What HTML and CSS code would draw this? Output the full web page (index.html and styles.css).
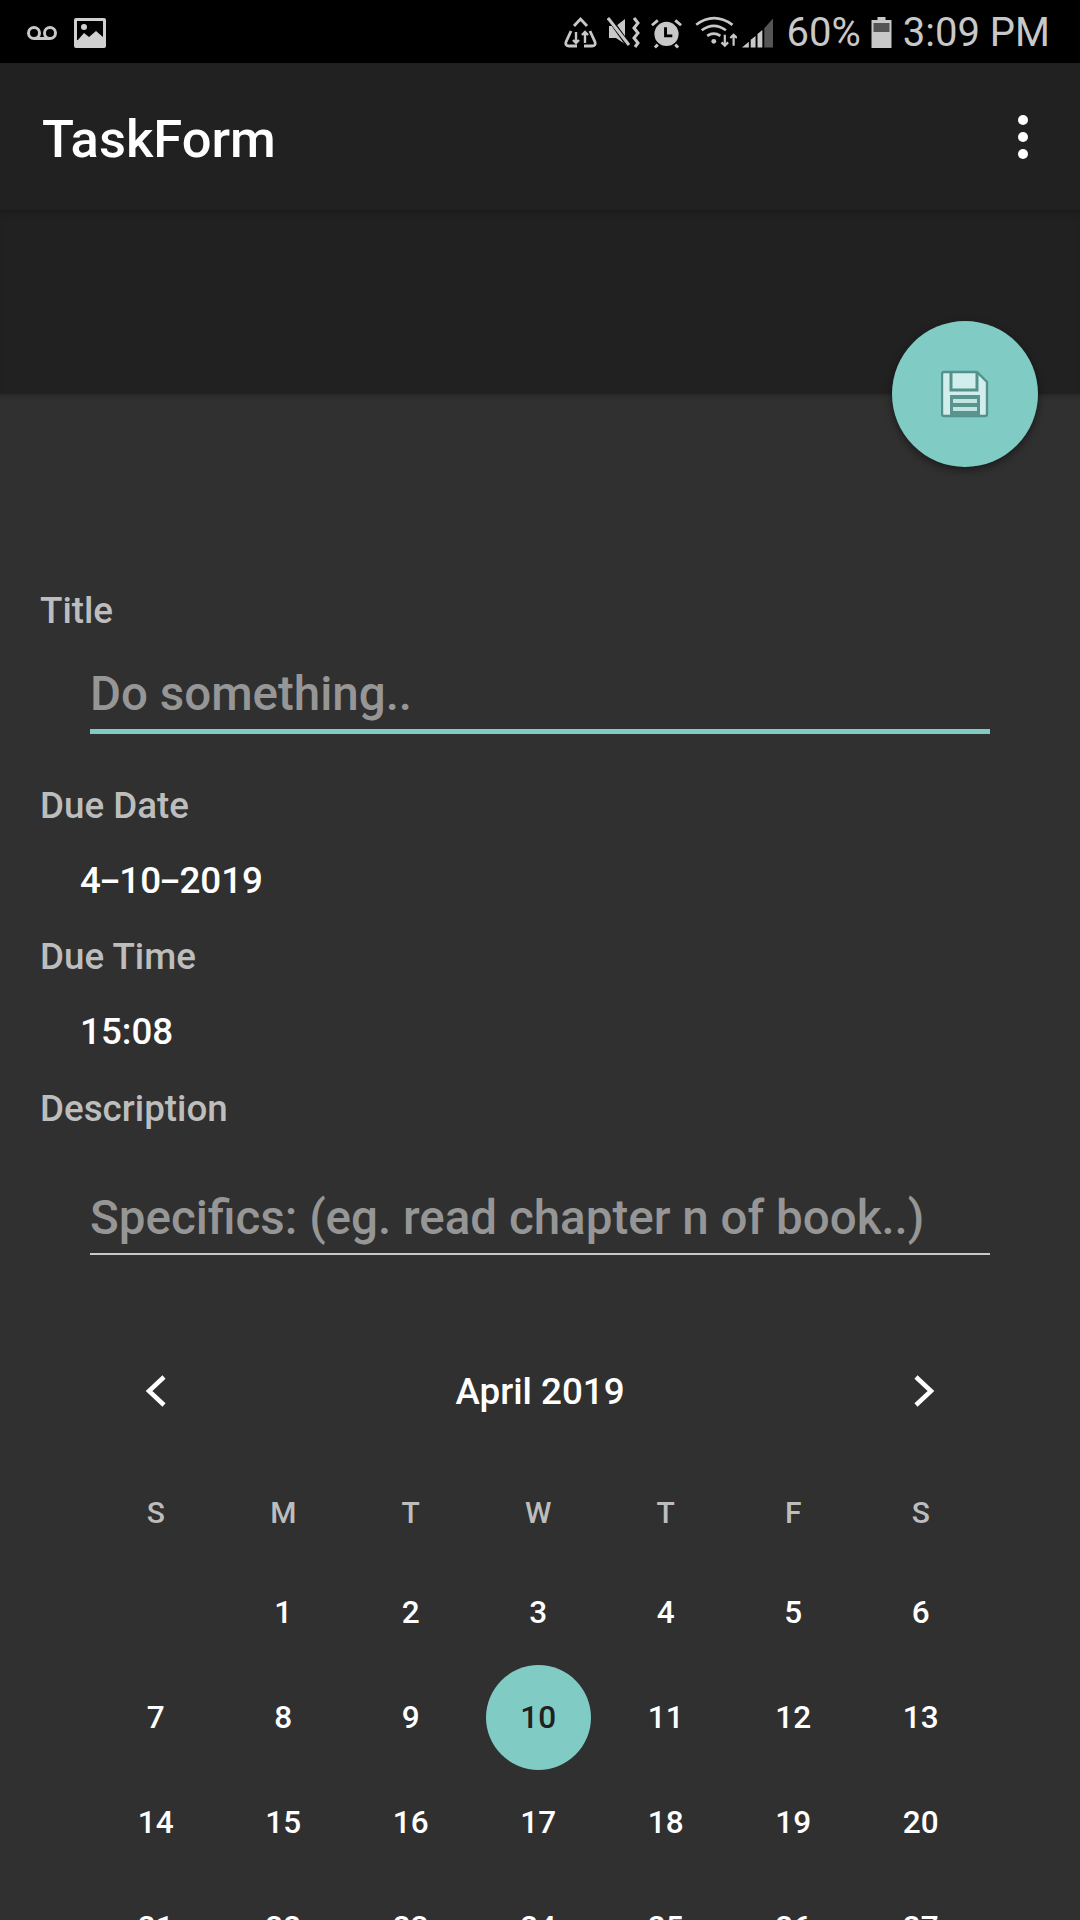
FILE: index.html
```html
<!DOCTYPE html>
<html lang="en">
<head>
    <meta charset="UTF-8">
    <meta name="viewport" content="width=device-width, initial-scale=1.0">
    <title>TaskForm</title>
    <link rel="stylesheet" href="styles.css">
</head>
<body>

<div class="status-bar">
    <div class="status-left">
        <svg width="32" height="16" viewBox="0 0 32 16" fill="none" stroke="#c8c8c8" stroke-width="3"><circle cx="8" cy="8" r="5.5"/><circle cx="24" cy="8" r="5.5"/><path d="M8 13.5h16"/></svg>
        <svg width="32" height="30" viewBox="0 0 32 30"><rect width="32" height="30" rx="2" fill="#d0d0d0"/><rect x="3" y="3" width="26" height="19" fill="#000"/><circle cx="10" cy="9" r="3" fill="#d0d0d0"/><path d="M3 23l7-8 5 4 7-6 7 6v5H3z" fill="#d0d0d0"/></svg>
    </div>
    <div class="status-right">
        <svg class="ic-recycle" width="33" height="31" viewBox="0 0 33 31" fill="none" stroke="#c8c8c8" stroke-width="2.8"><path d="M10 9l6.500-7 6.500 7M7 14L2 25q-1 4 3 4h8M26 14l5 11q1 4-3 4h-8"/><path d="M12 15v11M9 23l3 3 3-3M21 26V15M18 18l3-3 3 3" stroke-width="2.4"/></svg>
        <svg class="ic-mute" width="33" height="31" viewBox="0 0 33 31"><path d="M2 9h7l9-7v25l-9-6H2z" fill="#c8c8c8"/><path d="M2 1l20 28" stroke="#000" stroke-width="5"/><path d="M1 1l21 27" stroke="#c8c8c8" stroke-width="3"/><path d="M27 1l4 5-4 5 4 5-4 5 4 5-3 4" fill="none" stroke="#c8c8c8" stroke-width="3"/></svg>
        <svg class="ic-alarm" width="31" height="32" viewBox="0 0 32 32"><circle cx="16" cy="17" r="12.500" fill="#c8c8c8"/><path d="M1 8l6-5M31 8l-6-5M7 28l-3 3M25 28l3 3" stroke="#c8c8c8" stroke-width="3"/><path d="M15 10v9h7" fill="none" stroke="#000" stroke-width="3"/></svg>
        <svg class="ic-wifi" width="42" height="33" viewBox="0 0 38 30" fill="none" stroke="#c8c8c8" stroke-width="2.4"><path d="M1 8q16-12 33 0M6 13q11-8 22 0M11 18q6-4 12 0"/><circle cx="17" cy="23" r="2.200" fill="#c8c8c8" stroke="none"/><path d="M27 17v10M24 24l3 3 3-3M35 27V17M32 20l3-3 3 3" stroke-width="2"/></svg>
        <svg class="ic-signal" width="31" height="31" viewBox="0 0 32 31"><path d="M0 31l7-6v6z" fill="#c8c8c8"/><path d="M9 23l5-4v12H9z" fill="#c8c8c8"/><path d="M16 17l5-4v18h-5z" fill="#c8c8c8"/><path d="M23 11l9-10v30h-9z" fill="#555"/></svg>
        <span class="status-text pct">60%</span>
        <svg class="ic-batt" width="21" height="31" viewBox="0 0 20 31"><path d="M6 0h8v3h6v28H0V3h6z" fill="#c8c8c8"/><rect x="2" y="6" width="16" height="9" fill="#555"/></svg>
        <span class="status-text">3:09 PM</span>
    </div>
</div>

<div class="toolbar">
    <span class="toolbar-title">TaskForm</span>
    <div class="menu-dots"><i></i><i></i><i></i></div>
</div>
<div class="header-band"></div>

<button class="fab" type="button">
    <svg width="48" height="48" viewBox="0 0 48 48"><path d="M3 2h33l10 10v32q0 2-2 2H3q-2 0-2-2V4q0-2 2-2z" fill="#d2eeec" stroke="#55918c" stroke-width="2.400"/><path d="M10 2v18h26V2" fill="none" stroke="#55918c" stroke-width="3"/><rect x="21" y="4" width="11" height="14" fill="#d2eeec"/><rect x="9" y="25" width="30" height="21" fill="#5a948f"/><path d="M12 31h24M12 39h24" stroke="#c3e5e2" stroke-width="4"/></svg>
</button>

<main class="form">
    <label class="field-label" for="title">Title</label>
    <input class="text-input focused" id="title" type="text" placeholder="Do something..">

    <div class="field-label due-date">Due Date</div>
    <div class="field-value">4<span class="dash">-</span>10<span class="dash">-</span>2019</div>

    <div class="field-label due-time">Due Time</div>
    <div class="field-value">15:08</div>

    <label class="field-label description" for="desc">Description</label>
    <input class="text-input desc-input" id="desc" type="text" placeholder="Specifics: (eg. read chapter n of book..)">

    <div class="calendar">
        <div class="cal-head">
            <svg width="24" height="34" viewBox="0 0 24 34" fill="none" stroke="#fff" stroke-width="4.500"><path d="M20 3L5 17l15 14"/></svg>
            <span class="cal-month">April 2019</span>
            <svg width="24" height="34" viewBox="0 0 24 34" fill="none" stroke="#fff" stroke-width="4.500"><path d="M4 3l15 14L4 31"/></svg>
        </div>
        <div class="cal-grid cal-weekdays">
            <span>S</span><span>M</span><span>T</span><span>W</span><span>T</span><span>F</span><span>S</span>
        </div>
        <div class="cal-grid cal-days">
            <span></span><span>1</span><span>2</span><span>3</span><span>4</span><span>5</span><span>6</span>
            <span>7</span><span>8</span><span>9</span><span class="selected">10</span><span>11</span><span>12</span><span>13</span>
            <span>14</span><span>15</span><span>16</span><span>17</span><span>18</span><span>19</span><span>20</span>
            <span>21</span><span>22</span><span>23</span><span>24</span><span>25</span><span>26</span><span>27</span>
        </div>
    </div>
</main>

</body>
</html>
```

FILE: styles.css
```css
html, body {
    margin: 0;
    height: 1920px;
    overflow: hidden;
}
body {
    position: relative;
    font-family: Roboto, sans-serif;
    background: #303030;
    color: #fff;
}

/* status bar */
.status-bar {
    height: 63px;
    box-sizing: border-box;
    background: #000;
    display: flex;
    align-items: center;
    justify-content: space-between;
    padding: 2px 30px 0 26px;
}
.status-left {
    display: flex;
    align-items: center;
    gap: 16px;
}
.status-right {
    display: flex;
    align-items: center;
}
.status-text {
    font-size: 40px;
    color: #c8c8c8;
}
.ic-mute { margin-left: 10px; }
.ic-alarm { margin-left: 11px; }
.ic-wifi { margin-left: 13px; }
.ic-signal { margin-left: 5px; }
.pct { margin-left: 14px; }
.ic-batt { margin-left: 10px; margin-right: 11px; }

/* app bar */
.toolbar {
    height: 147px;
    background: #212121;
    display: flex;
    align-items: center;
    justify-content: space-between;
    padding: 0 52px 0 42px;
    box-sizing: border-box;
}
.toolbar-title {
    font-size: 52.5px;
    font-weight: 500;
    margin-top: 4px;
}
.menu-dots {
    display: flex;
    flex-direction: column;
    gap: 7px;
}
.menu-dots i {
    width: 10px;
    height: 10px;
    border-radius: 50%;
    background: #fff;
}
.header-band {
    height: 184px;
    background: #212121;
    box-shadow: inset 0 8px 8px -6px rgba(0, 0, 0, 0.25), 0 2px 4px rgba(0, 0, 0, 0.2);
}
.fab {
    position: absolute;
    left: 892px;
    top: 321px;
    width: 146px;
    height: 146px;
    border: none;
    border-radius: 50%;
    background: #80cbc4;
    box-shadow: 0 3px 8px rgba(0, 0, 0, 0.45);
    display: flex;
    align-items: center;
    justify-content: center;
    padding: 0;
}

/* form */
.form {
    padding: 197px 90px 0 40px;
}
.field-label {
    display: block;
    font-size: 36.75px;
    font-weight: 500;
    line-height: 40px;
    color: #bdbdbd;
}
.text-input {
    display: block;
    box-sizing: border-box;
    width: 900px;
    height: 71px;
    margin: 30px 0 0 50px;
    padding: 0 0 2px 0;
    background: none;
    border: none;
    border-bottom: 2px solid #c8c8c8;
    border-radius: 0;
    outline: none;
    font-family: Roboto, sans-serif;
    font-size: 47.5px;
    font-weight: 500;
    color: #fff;
}
.text-input::placeholder {
    color: #969696;
    opacity: 1;
}
.text-input.focused {
    height: 73px;
    border-bottom: 5px solid #80cbc4;
    padding-bottom: 3px;
}
.desc-input { margin-top: 55px; }
.due-date { margin-top: 52px; }
.due-time { margin-top: 34px; }
.description { margin-top: 35px; }
.field-value {
    margin: 33px 0 0 40px;
    font-size: 36.75px;
    font-weight: 500;
    line-height: 44px;
}
.dash {
    display: inline-block;
    width: 0.5em;
    text-align: center;
    transform: scaleX(1.7);
}

/* calendar */
.calendar {
    width: 893px;
    margin: 109px 0 0 52px;
}
.cal-head {
    display: flex;
    align-items: center;
    justify-content: space-between;
    height: 54px;
    padding: 0 49px 0 52px;
}
.cal-month {
    font-size: 36.75px;
    font-weight: 500;
}
.cal-grid {
    display: grid;
    grid-template-columns: repeat(7, 127.5px);
    text-align: center;
}
.cal-weekdays {
    margin-top: 75px;
    font-size: 30px;
    font-weight: 500;
    color: #bdbdbd;
    line-height: 40px;
}
.cal-days {
    margin-top: 27px;
    grid-auto-rows: 105px;
    font-size: 31.5px;
    font-weight: 500;
}
.cal-days span {
    display: flex;
    align-items: center;
    justify-content: center;
}
.cal-days .selected {
    color: #212121;
    background: #80cbc4;
    width: 105px;
    height: 105px;
    border-radius: 50%;
    justify-self: center;
}
```
